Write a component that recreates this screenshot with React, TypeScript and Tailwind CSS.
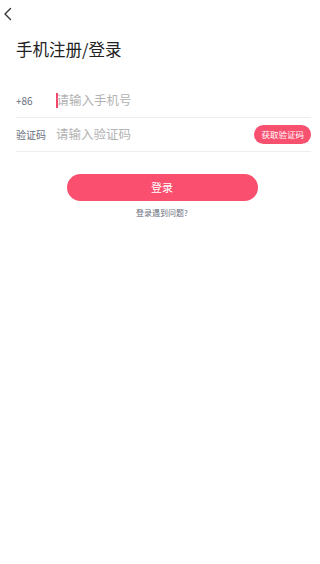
import { useState } from 'react'

const font = { fontFamily: '"Noto Sans CJK SC", "Noto Sans", sans-serif' }

export default function App() {
  const [phone, setPhone] = useState('')
  const [code, setCode] = useState('')

  return (
    <div className="w-[320px] h-[564px] bg-white text-[#222]" style={font}>
      {/* 顶部返回 */}
      <div className="h-[28px] flex items-center pl-[3px]">
        <svg width="10" height="14" viewBox="0 0 10 14" fill="none">
          <path d="M7.5 1.5L2 7l5.5 5.5" stroke="#333" strokeWidth="1.4" strokeLinecap="round" strokeLinejoin="round" />
        </svg>
      </div>

      <h1 className="mt-[7px] pl-[16px] text-[16.5px] leading-[28px] font-normal text-[#222]">手机注册/登录</h1>

      {/* 表单 */}
      <div className="mt-[21px] ml-[16px] mr-[9px]">
        <div className="flex items-center h-[34px] border-b border-[#eeeeee]">
          <span className="w-[40px] text-[10px] text-[#6a6f80]">+86</span>
          <div className="flex items-center">
            <span className="w-[1.5px] h-[15px] bg-[#f4466c]" />
            <input
              value={phone}
              onChange={(e) => setPhone(e.target.value)}
              placeholder="请输入手机号"
              className="w-[180px] -ml-[1px] text-[12.5px] outline-none placeholder:text-[#b3b3b3] bg-transparent"
            />
          </div>
        </div>
        <div className="flex items-center h-[34px] border-b border-[#eeeeee]">
          <span className="w-[40px] text-[10px] text-[#6a6f80]">验证码</span>
          <input
            value={code}
            onChange={(e) => setCode(e.target.value)}
            placeholder="请输入验证码"
            className="flex-1 min-w-0 text-[12.5px] outline-none placeholder:text-[#b3b3b3] bg-transparent"
          />
          <button className="h-[19px] px-[7px] rounded-full bg-[#f8506f] text-white text-[8.5px] leading-none">
            获取验证码
          </button>
        </div>
      </div>

      <div className="mt-[22px] flex flex-col items-center">
        <button className="w-[191px] h-[27px] ml-[4px] rounded-full bg-[#fa4f6e] text-white text-[11px]">登录</button>
        <span className="mt-[6px] ml-[4px] text-[8px] text-[#6a6f80]">登录遇到问题?</span>
      </div>
    </div>
  )
}
